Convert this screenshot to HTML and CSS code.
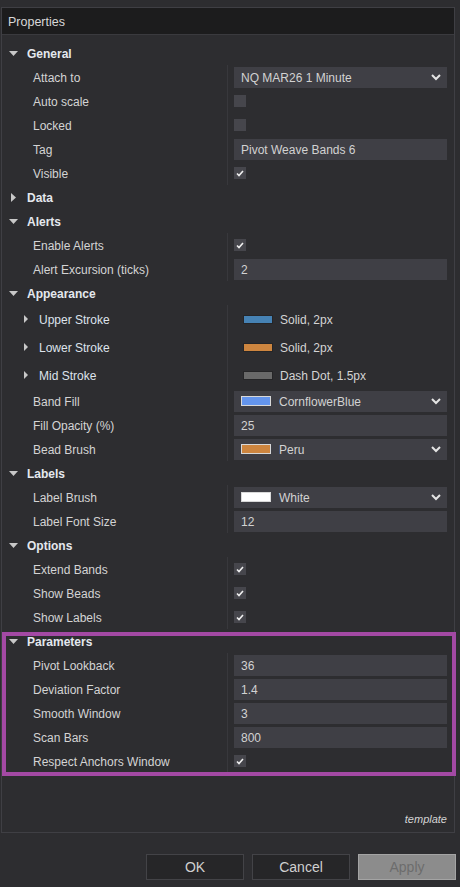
FILE: index.html
```html
<!DOCTYPE html>
<html>
<head>
<meta charset="utf-8">
<link rel="stylesheet" href="styles.css">
</head>
<body>
<div class="frame">
  <div class="header">Properties</div>
  <div class="list">
    <div class="cat"><span class="tri"><svg width="9" height="5"><polygon points="0,0 9,0 4.5,5"/></svg></span><span class="lbl">General</span></div>
    <div class="prop"><div class="name"><span class="lbl">Attach to</span></div><div class="val"><div class="box drop"><span class="lbl">NQ MAR26 1 Minute</span><svg class="chev" width="10" height="7"><polyline points="1,1 5,5 9,1"/></svg></div></div></div>
    <div class="prop"><div class="name"><span class="lbl">Auto scale</span></div><div class="val"><span class="cb"></span></div></div>
    <div class="prop"><div class="name"><span class="lbl">Locked</span></div><div class="val"><span class="cb"></span></div></div>
    <div class="prop"><div class="name"><span class="lbl">Tag</span></div><div class="val"><div class="box"><span class="lbl">Pivot Weave Bands 6</span></div></div></div>
    <div class="prop"><div class="name"><span class="lbl">Visible</span></div><div class="val"><span class="cb"><svg width="8" height="7"><polyline points="1,3.5 3,5.5 7,1"/></svg></span></div></div>
    <div class="cat"><span class="tri"><svg width="9" height="9"><polygon points="2,0 7,4.5 2,9"/></svg></span><span class="lbl">Data</span></div>
    <div class="cat"><span class="tri"><svg width="9" height="5"><polygon points="0,0 9,0 4.5,5"/></svg></span><span class="lbl">Alerts</span></div>
    <div class="prop"><div class="name"><span class="lbl">Enable Alerts</span></div><div class="val"><span class="cb"><svg width="8" height="7"><polyline points="1,3.5 3,5.5 7,1"/></svg></span></div></div>
    <div class="prop"><div class="name"><span class="lbl">Alert Excursion (ticks)</span></div><div class="val"><div class="box"><span class="lbl">2</span></div></div></div>
    <div class="cat"><span class="tri"><svg width="9" height="5"><polygon points="0,0 9,0 4.5,5"/></svg></span><span class="lbl">Appearance</span></div>
    <div class="prop sub"><div class="name"><span class="stri"><svg width="4" height="8"><polygon points="0,0 4,4 0,8"/></svg></span><span class="lbl">Upper Stroke</span></div><div class="val stroke"><span class="sw sw-blue"></span><span class="lbl">Solid, 2px</span></div></div>
    <div class="prop sub"><div class="name"><span class="stri"><svg width="4" height="8"><polygon points="0,0 4,4 0,8"/></svg></span><span class="lbl">Lower Stroke</span></div><div class="val stroke"><span class="sw sw-orange"></span><span class="lbl">Solid, 2px</span></div></div>
    <div class="prop sub"><div class="name"><span class="stri"><svg width="4" height="8"><polygon points="0,0 4,4 0,8"/></svg></span><span class="lbl">Mid Stroke</span></div><div class="val stroke"><span class="sw sw-gray"></span><span class="lbl">Dash Dot, 1.5px</span></div></div>
    <div class="prop"><div class="name"><span class="lbl">Band Fill</span></div><div class="val"><div class="box drop"><span class="bsw bsw-cblue"></span><span class="lbl">CornflowerBlue</span><svg class="chev" width="10" height="7"><polyline points="1,1 5,5 9,1"/></svg></div></div></div>
    <div class="prop"><div class="name"><span class="lbl">Fill Opacity (%)</span></div><div class="val"><div class="box"><span class="lbl">25</span></div></div></div>
    <div class="prop"><div class="name"><span class="lbl">Bead Brush</span></div><div class="val"><div class="box drop"><span class="bsw bsw-peru"></span><span class="lbl">Peru</span><svg class="chev" width="10" height="7"><polyline points="1,1 5,5 9,1"/></svg></div></div></div>
    <div class="cat"><span class="tri"><svg width="9" height="5"><polygon points="0,0 9,0 4.5,5"/></svg></span><span class="lbl">Labels</span></div>
    <div class="prop"><div class="name"><span class="lbl">Label Brush</span></div><div class="val"><div class="box drop"><span class="bsw bsw-white"></span><span class="lbl">White</span><svg class="chev" width="10" height="7"><polyline points="1,1 5,5 9,1"/></svg></div></div></div>
    <div class="prop"><div class="name"><span class="lbl">Label Font Size</span></div><div class="val"><div class="box"><span class="lbl">12</span></div></div></div>
    <div class="cat"><span class="tri"><svg width="9" height="5"><polygon points="0,0 9,0 4.5,5"/></svg></span><span class="lbl">Options</span></div>
    <div class="prop"><div class="name"><span class="lbl">Extend Bands</span></div><div class="val"><span class="cb"><svg width="8" height="7"><polyline points="1,3.5 3,5.5 7,1"/></svg></span></div></div>
    <div class="prop"><div class="name"><span class="lbl">Show Beads</span></div><div class="val"><span class="cb"><svg width="8" height="7"><polyline points="1,3.5 3,5.5 7,1"/></svg></span></div></div>
    <div class="prop"><div class="name"><span class="lbl">Show Labels</span></div><div class="val"><span class="cb"><svg width="8" height="7"><polyline points="1,3.5 3,5.5 7,1"/></svg></span></div></div>
    <div class="cat"><span class="tri"><svg width="9" height="5"><polygon points="0,0 9,0 4.5,5"/></svg></span><span class="lbl">Parameters</span></div>
    <div class="prop"><div class="name"><span class="lbl">Pivot Lookback</span></div><div class="val"><div class="box"><span class="lbl">36</span></div></div></div>
    <div class="prop"><div class="name"><span class="lbl">Deviation Factor</span></div><div class="val"><div class="box"><span class="lbl">1.4</span></div></div></div>
    <div class="prop"><div class="name"><span class="lbl">Smooth Window</span></div><div class="val"><div class="box"><span class="lbl">3</span></div></div></div>
    <div class="prop"><div class="name"><span class="lbl">Scan Bars</span></div><div class="val"><div class="box"><span class="lbl">800</span></div></div></div>
    <div class="prop"><div class="name"><span class="lbl">Respect Anchors Window</span></div><div class="val"><span class="cb"><svg width="8" height="7"><polyline points="1,3.5 3,5.5 7,1"/></svg></span></div></div>
  </div>
  <div class="foot">template</div>
</div>
<div class="highlight"></div>
<div class="buttons">
  <div class="btn">OK</div>
  <div class="btn">Cancel</div>
  <div class="btn btn-dis">Apply</div>
</div>
</body>
</html>
```

FILE: styles.css
```css
html, body {
  margin: 0;
  padding: 0;
}
body {
  background: #2d2d30;
  font-family: "Liberation Sans", Arial, sans-serif;
  font-size: 12px;
  color: #d4d4d4;
  position: relative;
  width: 460px;
  height: 887px;
  overflow: hidden;
}
.frame {
  margin: 7px 0 0 1px;
  width: 452px;
  height: 824px;
  border: 1px solid #3f3f44;
  display: flex;
  flex-direction: column;
  box-sizing: content-box;
}
.header {
  height: 27px;
  background: #1c1c1d;
  border-bottom: 1px solid #3a3a3e;
  padding-left: 6px;
  padding-top: 1px;
  box-sizing: border-box;
  line-height: 27px;
  font-size: 12.5px;
  color: #d8d8d8;
}
.list {
  padding-top: 6px;
  display: flex;
  flex-direction: column;
}
.lbl {
  position: relative;
  top: 1px;
}
.cat {
  height: 24px;
  display: flex;
  align-items: center;
  font-weight: bold;
  color: #e4e8ee;
}
.tri {
  width: 25px;
  padding-left: 7px;
  box-sizing: border-box;
  display: flex;
  align-items: center;
}
.tri svg, .stri svg {
  fill: #c8c8c8;
}
.prop {
  height: 24px;
  display: flex;
}
.prop.sub {
  height: 28px;
}
.name {
  width: 226px;
  border-right: 1px solid #38383c;
  padding-left: 31px;
  box-sizing: border-box;
  display: flex;
  align-items: center;
  white-space: nowrap;
}
.sub .name {
  padding-left: 22px;
  color: #dde3ec;
}
.stri {
  width: 15px;
  display: flex;
  align-items: center;
}
.val {
  flex: 1;
  display: flex;
  align-items: center;
  padding-left: 6px;
  padding-right: 7px;
}
.box {
  flex: 1;
  height: 21px;
  background: #3f3f45;
  display: flex;
  align-items: center;
  padding-left: 7px;
  color: #d2d2d2;
}
.drop {
  position: relative;
}
.chev {
  margin-left: auto;
  margin-right: 6px;
}
.chev polyline {
  fill: none;
  stroke: #e4e4e4;
  stroke-width: 2;
}
.cb {
  width: 12px;
  height: 12px;
  background: #46464c;
  display: flex;
  align-items: center;
  justify-content: center;
}
.cb polyline {
  fill: none;
  stroke: #f0f0f0;
  stroke-width: 1.6;
}
.stroke {
  padding-left: 15px;
  color: #d4d4d4;
}
.sw {
  width: 28px;
  height: 7px;
  border: 1px solid #252527;
  margin-right: 7px;
}
.sw-blue { background: #4682b4; }
.sw-orange { background: #cd853f; }
.sw-gray { background: #696969; }
.bsw {
  width: 28px;
  height: 8px;
  border: 1px solid #d8d8d8;
  margin-right: 8px;
}
.bsw-cblue { background: #6495ed; }
.bsw-peru { background: #cd853f; }
.bsw-white { background: #ffffff; }
.foot {
  margin-top: auto;
  text-align: right;
  font-style: italic;
  font-size: 11px;
  color: #d4d4d4;
  padding-right: 7px;
  padding-bottom: 7px;
}
.highlight {
  position: absolute;
  left: 2px;
  top: 632px;
  width: 446px;
  height: 136px;
  border: 4px solid #a349a4;
}
.buttons {
  display: flex;
  justify-content: flex-end;
  gap: 8px;
  margin-top: 21px;
  padding-right: 4px;
}
.btn {
  width: 96px;
  height: 24px;
  border: 1px solid #434347;
  background: #262628;
  display: flex;
  align-items: center;
  justify-content: center;
  font-size: 14px;
  color: #d0d0d0;
}
.btn-dis {
  background: #8c8c8c;
  border-color: #a4a4a4;
  color: #6c6c6c;
}
```
